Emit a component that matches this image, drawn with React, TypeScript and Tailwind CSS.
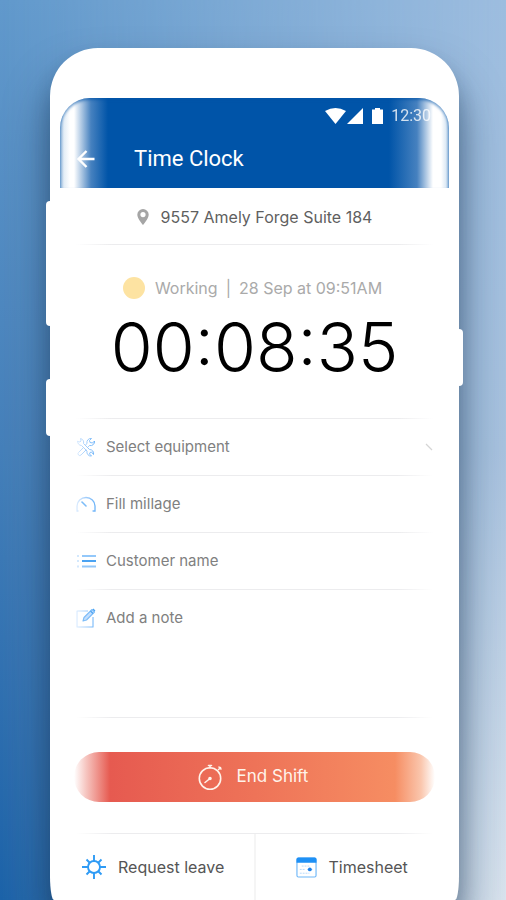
import type { ReactNode } from 'react';

const fieldText =
  'w-full min-w-0 appearance-none bg-transparent text-[15px] leading-6 text-[#808080] outline-none placeholder:text-[#808080] placeholder:opacity-100';

function Rule() {
  return (
    <div className="h-px w-full bg-[linear-gradient(to_right,transparent,#ececee_10%,#ececee_90%,transparent)]" />
  );
}

function ToolsIcon() {
  return (
    <svg viewBox="0 0 20 20" className="size-5" fill="none" stroke="url(#fade)" strokeWidth="1" strokeLinejoin="round" strokeLinecap="round">
      <defs>
        <linearGradient id="fade" gradientUnits="userSpaceOnUse" x1="0" y1="0" x2="20" y2="0">
          <stop offset="0" stopColor="#deedff" />
          <stop offset="0.5" stopColor="#a3cefb" />
          <stop offset="1" stopColor="#66b0f8" />
        </linearGradient>
      </defs>
      <path d="M1.5 4.5 4 5l1-1-.5-2.5A4 4 0 0 1 7.5 6.500l6 6a4 4 0 0 1 4 5L15.500 15l-1.500.5-.5 1.500 2 2a4 4 0 0 1-4.500-5l-5.500-5.500A4 4 0 0 1 1.500 4.500Z" />
      <path d="m12.500 9.500 1-1a4 4 0 0 0 5-4.500L16.500 6 14 5.500 13.500 3.500l2-2a4 4 0 0 0-4.500 5l-1.500 1.500M7.500 10.500l-5 5a1.700 1.700 0 0 0 2.500 2.500l5-5" />
    </svg>
  );
}

function GaugeIcon() {
  return (
    <svg viewBox="0 0 20 20" className="size-5" fill="none" stroke="url(#fade)" strokeWidth="1.3" strokeLinecap="round">
      <path d="M2 17H1v-5a9 8.500 0 0 1 18 0v5h-2" />
      <path d="m6 8 4 4" stroke="#7cbcf8" strokeWidth="1.6" />
    </svg>
  );
}

function ListIcon() {
  return (
    <svg viewBox="0 0 20 20" className="size-5" fill="none" strokeWidth="2">
      <path d="M6 5h14M6 15.500h14" stroke="#93c8fa" />
      <path d="M6 10h14" stroke="#4ba3f2" />
      <path d="M1 5h2M1 10h2M1 15.500h2" stroke="#d3e8fd" />
    </svg>
  );
}

function NoteIcon() {
  return (
    <svg viewBox="0 0 20 20" className="size-5" fill="none" stroke="url(#fade)" strokeWidth="1.100" strokeLinejoin="round">
      <path d="M12 3H1v16h16V9" />
      <path d="m7 13 1-3.500 8-8L18.500 4l-8 8L7 13Z" fill="#c3dffd" stroke="#7cbcf8" />
      <path d="m14.500 3 2.500 2.500M17 1l2 2" stroke="#4ba3f2" />
    </svg>
  );
}

function StopwatchIcon() {
  return (
    <svg viewBox="0 0 26 26" className="size-[26px]" fill="none" stroke="currentColor" strokeWidth="1.600" strokeLinecap="round">
      <circle cx="13" cy="14.500" r="10.700" />
      <path d="M11.500 1.500h3M13 1.500V4M21.500 5.500l2-2M22 3l2 2" />
      <path d="m8 18.500 5-4" />
      <circle cx="13" cy="14.500" r="1" fill="currentColor" />
    </svg>
  );
}

function SunIcon() {
  return (
    <svg viewBox="0 0 24 24" className="size-6" fill="none" stroke="#2f9bf5" strokeWidth="1.900">
      <circle cx="12" cy="12" r="6" />
      <path d="M12 0v6M12 18v6M0 12h6M18 12h6M4.500 4.500 8 8M16 16l3.500 3.500M4.500 19.500 8 16M16 8l3.500-3.500" />
    </svg>
  );
}

function CalendarIcon() {
  return (
    <svg viewBox="0 0 22 22" className="size-[21px]" fill="none">
      <rect x="1" y="1" width="20" height="20" rx="1.500" fill="#fff" stroke="#6fb7f8" strokeWidth="1.200" />
      <path d="M.5 6V2.500a2 2 0 0 1 2-2h17a2 2 0 0 1 2 2V6Z" fill="#1e90f5" />
      <path d="M6 9.500h9M4 13h6M4 17h10" stroke="#b5d8fb" strokeDasharray="2 1" />
      <path d="M12 13h5" stroke="#6fb7f8" />
      <circle cx="14.500" cy="13" r="2" fill="#1e80e8" />
    </svg>
  );
}

function StatusBar() {
  return (
    <div className="flex h-9 items-center justify-end pr-[18px] text-white">
      <svg viewBox="0 0 60 16" className="mr-1.5 h-4 w-[60px]" fill="currentColor">
        <path d="M0 3q10.500-6 21 0L10.500 16Z" />
        <path d="M38 0v16H22Z" />
        <path d="M47 1.500h3V0h5v1.500h3V16H47Z" />
      </svg>
      <span className="font-['Roboto',sans-serif] text-[16px] leading-none opacity-80">12:30</span>
    </div>
  );
}

interface FieldProps {
  id: string;
  label: string;
  icon: ReactNode;
  children: ReactNode;
}

function Field({ id, label, icon, children }: FieldProps) {
  return (
    <div className="flex h-14 items-center gap-2.5 pl-4">
      <label htmlFor={id} aria-label={label} className="shrink-0">
        {icon}
      </label>
      {children}
    </div>
  );
}

export default function App() {
  return (
    <main className="relative isolate min-h-screen overflow-hidden bg-linear-to-b from-[#6199cc] via-[#4580ba] to-[#1c63a9] pt-12 pr-[47px] pl-[50px] font-['Inter','Liberation_Sans',sans-serif]">
      <div className="absolute inset-0 -z-10 bg-linear-to-b from-[#9dbddf] via-[#a9c3df] to-[#dae4ee] [mask-image:linear-gradient(to_right,transparent,black)]" />

      <div className="relative flex min-h-[calc(100vh-48px)] flex-col rounded-t-[48px] [border-bottom-left-radius:4px_24px] [border-bottom-right-radius:4px_24px] bg-white px-2.5 pt-[50px] shadow-[0_30px_44px_rgba(10,35,65,0.5),0_14px_20px_rgba(10,35,65,0.2)]">
        <span className="absolute top-[153px] -left-1 h-[125px] w-1 rounded-l-sm bg-white" />
        <span className="absolute top-[331px] -left-1 h-[57px] w-1 rounded-l-sm bg-white" />
        <span className="absolute top-[281px] -right-1 h-[57px] w-1 rounded-r-sm bg-white" />

        <header className="h-[90px] rounded-t-[30px] bg-[linear-gradient(to_right,#8fb5da_0,#e3edf6_4px,#fff_10px,#fff_14px,#4681bf_31px,#0054a8_48px,#0054a8_calc(100%-60px),#4681bf_calc(100%-32px),#fff_calc(100%-16px),#fff_calc(100%-8px),#dce9f5_calc(100%-3px),#8fb5da_100%)] shadow-[inset_0_2px_3px_rgba(0,84,168,0.6)]">
          <StatusBar />
          <div className="flex h-[54px] items-center pb-1 pl-4 text-white">
            <button type="button" aria-label="Back">
              <svg viewBox="0 0 20 20" className="size-5" fill="none" stroke="currentColor" strokeWidth="2.400">
                <path d="M18.500 10H3M10.500 2 2.500 10l8 8" />
              </svg>
            </button>
            <h1 className="pl-[38px] font-['Roboto',sans-serif] text-[22px] leading-7">Time Clock</h1>
          </div>
        </header>

        <div className="flex h-14 items-center justify-center gap-3 pt-0.5 text-[#5f5f5f]">
          <svg viewBox="0 0 12 16" className="h-4 w-3" fill="#a5a5a5" fillRule="evenodd">
            <path d="M6 0a5.700 5.700 0 0 1 5.700 5.700C11.700 9.500 6 16 6 16S.3 9.500.3 5.700A5.700 5.700 0 0 1 6 0Zm0 3a2.600 2.600 0 1 0 0 5.200A2.600 2.600 0 0 0 6 3Z" />
          </svg>
          <span className="text-[16px]">9557 Amely Forge Suite 184</span>
        </div>
        <div className="px-4">
          <Rule />
        </div>

        <section className="flex flex-col items-center pt-[31px]">
          <div className="flex h-6 items-center pr-1 text-[16px] text-[#aaa]">
            <span className="mr-2.5 size-[22px] rounded-full bg-[#fde3a2]" />
            <span>Working</span>
            <span className="mx-2">|</span>
            <span>28 Sep at 09:51AM</span>
          </div>
          <time className="pt-3 text-[68px] leading-[70px] font-light text-black">00:08:35</time>
        </section>

        <form className="pt-9">
          <div className="px-4">
            <Rule />
          </div>
          <Field id="equipment" label="Select equipment" icon={<ToolsIcon />}>
            <select id="equipment" className={fieldText}>
              <option>Select equipment</option>
            </select>
            <svg viewBox="0 0 8 8" className="mr-4 size-2 shrink-0" fill="none" stroke="#d5d5d5" strokeWidth="1.300">
              <path d="m1 1 6 6" />
            </svg>
          </Field>
          <div className="px-4">
            <Rule />
          </div>
          <Field id="millage" label="Fill millage" icon={<GaugeIcon />}>
            <input id="millage" type="text" placeholder="Fill millage" className={fieldText} />
          </Field>
          <div className="px-4">
            <Rule />
          </div>
          <Field id="customer" label="Customer name" icon={<ListIcon />}>
            <input id="customer" type="text" placeholder="Customer name" className={fieldText} />
          </Field>
          <div className="px-4">
            <Rule />
          </div>
          <div className="flex h-[127px] items-start gap-2.5 pt-4 pl-4">
            <label htmlFor="note" aria-label="Add a note" className="shrink-0 pt-0.5">
              <NoteIcon />
            </label>
            <textarea id="note" placeholder="Add a note" className={`${fieldText} h-24 resize-none`} />
          </div>
          <div className="px-4">
            <Rule />
          </div>
        </form>

        <div className="px-3.5 pt-[34px] pb-[31px]">
          <button
            type="button"
            className="flex h-[50px] w-full items-center justify-center gap-3.5 rounded-full bg-[linear-gradient(to_right,#fff_0,#f6c6c1_12px,#e65a50_36px,#ee7358_50%,#f68d62_calc(100%-40px),#fac6ad_calc(100%-14px),#fff_100%)] pr-1 text-[17px] text-[#fff3ea]"
          >
            <StopwatchIcon />
            End Shift
          </button>
        </div>
        <div className="px-4">
          <Rule />
        </div>

        <nav className="grid flex-1 grid-cols-2 pl-0.5 text-[16px] text-[#555]">
          <a href="#leave" className="flex items-center gap-3 border-r-2 border-[#f5f5f5] pl-5">
            <SunIcon />
            Request leave
          </a>
          <a href="#timesheet" className="flex items-center gap-3 pl-10">
            <CalendarIcon />
            Timesheet
          </a>
        </nav>
      </div>
    </main>
  );
}
